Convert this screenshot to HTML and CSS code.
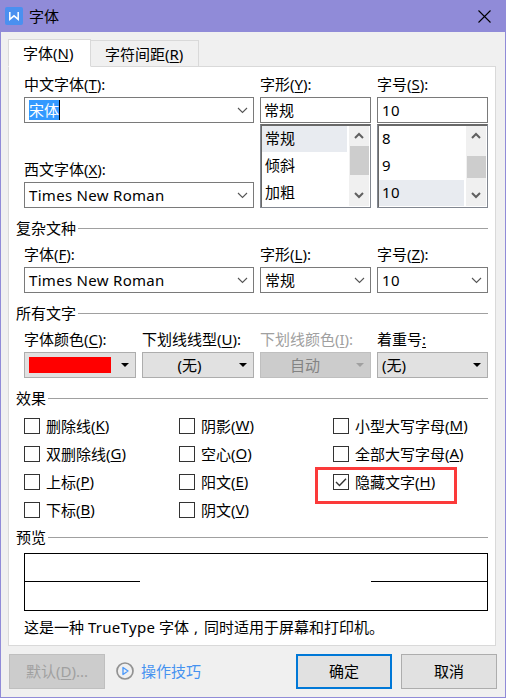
FILE: index.html
```html
<!DOCTYPE html>
<html lang="zh-CN">
<head>
  <meta charset="UTF-8">
  <title>字体</title>
  <link rel="stylesheet" href="styles.css">
</head>
<body>
  <div class="dialog">
    <div class="titlebar">
      <svg class="logo" width="18" height="18" viewBox="0 0 18 18">
        <rect width="18" height="18" rx="2" fill="#4a90f0"/>
        <path d="M4.8 5v7.3L9 8.8l4.2 3.5V5" fill="none" stroke="#fff" stroke-width="1.5"/>
      </svg>
      <span class="title">字体</span>
      <svg class="close" width="13" height="13" viewBox="0 0 13 13">
        <path d="M.5.5l12 12M12.5.5l-12 12" stroke="#000" stroke-width="1.1"/>
      </svg>
    </div>

    <div class="tabs">
      <div class="tab active">字体(<u>N</u>)</div>
      <div class="tab">字符间距(<u>R</u>)</div>
    </div>

    <div class="panel">
      <div class="fonts">
        <div class="font-names">
          <div class="label">中文字体(<u>T</u>):</div>
          <div class="select"><span class="selected">宋体</span><svg class="arrow" width="11" height="7" viewBox="0 0 11 7"><path d="M1 1l4.5 4.5L10 1"/></svg></div>
          <div class="label label-west">西文字体(<u>X</u>):</div>
          <div class="select latin">Times New Roman<svg class="arrow" width="11" height="7" viewBox="0 0 11 7"><path d="M1 1l4.5 4.5L10 1"/></svg></div>
        </div>
        <div class="font-col">
          <div class="label">字形(<u>Y</u>):</div>
          <div class="select edit">常规</div>
          <div class="list">
            <div class="options">
              <div class="option current">常规</div>
              <div class="option">倾斜</div>
              <div class="option">加粗</div>
            </div>
            <div class="scrollbar">
              <svg width="10" height="7" viewBox="0 0 10 7"><path d="M1 6l4-4 4 4"/></svg>
              <div class="track"><div class="thumb thumb-style"></div></div>
              <svg width="10" height="7" viewBox="0 0 10 7"><path d="M1 1l4 4 4-4"/></svg>
            </div>
          </div>
        </div>
        <div class="font-col">
          <div class="label">字号(<u>S</u>):</div>
          <div class="select latin">10</div>
          <div class="list">
            <div class="options latin">
              <div class="option">8</div>
              <div class="option">9</div>
              <div class="option current">10</div>
            </div>
            <div class="scrollbar">
              <svg width="10" height="7" viewBox="0 0 10 7"><path d="M1 6l4-4 4 4"/></svg>
              <div class="track"><div class="thumb thumb-size"></div></div>
              <svg width="10" height="7" viewBox="0 0 10 7"><path d="M1 1l4 4 4-4"/></svg>
            </div>
          </div>
        </div>
      </div>

      <div class="section">复杂文种</div>
      <div class="fonts">
        <div class="font-names">
          <div class="label">字体(<u>F</u>):</div>
          <div class="select latin">Times New Roman<svg class="arrow" width="11" height="7" viewBox="0 0 11 7"><path d="M1 1l4.5 4.5L10 1"/></svg></div>
        </div>
        <div class="font-col">
          <div class="label">字形(<u>L</u>):</div>
          <div class="select">常规<svg class="arrow" width="11" height="7" viewBox="0 0 11 7"><path d="M1 1l4.5 4.5L10 1"/></svg></div>
        </div>
        <div class="font-col">
          <div class="label">字号(<u>Z</u>):</div>
          <div class="select latin">10<svg class="arrow" width="11" height="7" viewBox="0 0 11 7"><path d="M1 1l4.5 4.5L10 1"/></svg></div>
        </div>
      </div>

      <div class="section">所有文字</div>
      <div class="all-text">
        <div>
          <div class="label">字体颜色(<u>C</u>):</div>
          <div class="drop"><span class="color"></span><span class="caret"></span></div>
        </div>
        <div>
          <div class="label">下划线线型(<u>U</u>):</div>
          <div class="drop"><span class="drop-text">(无)</span><span class="caret"></span></div>
        </div>
        <div class="disabled">
          <div class="label">下划线颜色(<u>I</u>):</div>
          <div class="drop"><span class="drop-text">自动</span><span class="caret"></span></div>
        </div>
        <div>
          <div class="label">着重号<u>:</u></div>
          <div class="drop"><span class="drop-text left">(无)</span><span class="caret"></span></div>
        </div>
      </div>

      <div class="section">效果</div>
      <div class="effects">
        <div class="check"><span class="box"></span>删除线(<u>K</u>)</div>
        <div class="check"><span class="box"></span>阴影(<u>W</u>)</div>
        <div class="check"><span class="box"></span>小型大写字母(<u>M</u>)</div>
        <div class="check"><span class="box"></span>双删除线(<u>G</u>)</div>
        <div class="check"><span class="box"></span>空心(<u>O</u>)</div>
        <div class="check"><span class="box"></span>全部大写字母(<u>A</u>)</div>
        <div class="check"><span class="box"></span>上标(<u>P</u>)</div>
        <div class="check"><span class="box"></span>阳文(<u>E</u>)</div>
        <div class="check marked"><span class="box"><svg width="14" height="14" viewBox="0 0 14 14"><path d="M2 7l3.5 3.5L12 3.7"/></svg></span>隐藏文字(<u>H</u>)</div>
        <div class="check"><span class="box"></span>下标(<u>B</u>)</div>
        <div class="check"><span class="box"></span>阴文(<u>V</u>)</div>
      </div>

      <div class="section section-preview">预览</div>
      <div class="preview"><span></span><span></span></div>
      <div class="note">这是一种 <span class="latin">TrueType</span> 字体<span class="comma">,</span>同时适用于屏幕和打印机。</div>
    </div>

    <div class="footer">
      <div class="btn btn-off">默认(<u>D</u>)...</div>
      <div class="tips">
        <svg width="18" height="18" viewBox="0 0 18 18">
          <circle cx="9" cy="9" r="8" fill="none" stroke="#929292" stroke-width="1.7"/>
          <path d="M7 5.5v7l5-3.5z" fill="none" stroke="#4f9bfa" stroke-width="1.4" stroke-linejoin="round"/>
        </svg>
        <span>操作技巧</span>
      </div>
      <div class="btn btn-ok">确定</div>
      <div class="btn">取消</div>
    </div>
  </div>
</body>
</html>
```
FILE: styles.css
```css
*,
*::after {
  box-sizing: border-box;
}

body {
  margin: 0;
  font-family: "Noto Sans", "Noto Sans CJK SC", sans-serif;
  font-size: 15px;
  color: #000;
}

u {
  text-underline-offset: 2px;
  text-decoration-thickness: 1px;
}

.latin {
  letter-spacing: 0.3px;
}

.dialog {
  width: 506px;
  height: 698px;
  background: #f0f0f0;
  border: 1px solid #908bd8;
  border-top: 0;
}

.titlebar {
  display: flex;
  align-items: center;
  height: 32px;
  padding: 0 14px 0 4px;
  background: #908bd8;
}

.title {
  flex: 1;
  margin-left: 6px;
  padding-bottom: 1px;
}

/* tabs */
.tabs {
  display: flex;
  align-items: flex-end;
  height: 35px;
  padding-left: 7px;
}

.tab {
  height: 27px;
  width: 108px;
  padding-left: 14px;
  line-height: 27px;
  border: 1px solid #d9d9d9;
  border-left: 0;
  white-space: nowrap;
}

.tab.active {
  position: relative;
  z-index: 1;
  width: 83px;
  height: 28px;
  padding-left: 14px;
  line-height: 26px;
  background: #fff;
  border-left: 1px solid #d9d9d9;
  border-bottom-color: #fff;
}

.panel {
  width: 488px;
  height: 580px;
  margin: -1px 0 0 7px;
  padding: 6px 7px 0;
  background: #fff;
  border: 1px solid #d9d9d9;
}

.fonts,
.all-text {
  display: flex;
  gap: 6px;
  padding-left: 8px;
}

.font-names {
  width: 230px;
}

.font-col {
  width: 111px;
}

.label {
  height: 24px;
  line-height: 23px;
  white-space: nowrap;
}

.label-west {
  margin-top: 35px;
}

.select {
  display: flex;
  align-items: center;
  justify-content: space-between;
  height: 26px;
  padding: 0 5px 0 4px;
  border: 1px solid #7a7a7a;
  line-height: 24px;
}

.edit {
  padding-left: 3px;
}

.selected {
  height: 20px;
  line-height: 20px;
  color: #fff;
  background: #3399ff;
  border-right: 1px solid #000;
}

.arrow path {
  fill: none;
  stroke: #555;
  stroke-width: 1.1;
}

.list {
  display: flex;
  height: 84px;
  margin-top: 1px;
  padding: 1px;
  border: 1px solid #828790;
  border-top-color: #696969;
  box-shadow: inset 1px 1px 0 #696969;
}

.options {
  flex: 1;
  margin-right: 2px;
}

.option {
  height: 27px;
  padding-left: 3px;
  line-height: 25px;
}

.option.current {
  height: 26px;
  margin-bottom: 1px;
  background: #e8ebf0;
}

.scrollbar {
  display: flex;
  flex-direction: column;
  align-items: center;
  width: 20px;
  padding-top: 6px;
  background: #f0f0f0;
}

.scrollbar path {
  fill: none;
  stroke: #606060;
  stroke-width: 2;
}

.track {
  width: 19px;
  height: 53px;
}

.thumb {
  position: relative;
  background: #cdcdcd;
}

.thumb-style {
  top: 7px;
  height: 29px;
}

.thumb-size {
  top: 17px;
  height: 22px;
}

/* group title with a rule up to the right edge */
.section {
  display: flex;
  align-items: center;
  height: 20px;
  margin: 10px 0 5px;
  line-height: 20px;
}

.section::after {
  content: "";
  flex: 1;
  height: 1px;
  margin-left: 2px;
  background: #a0a0a0;
}

.all-text > div {
  width: 112px;
}

.all-text > div:nth-child(n+3) {
  width: 111px;
}

.drop {
  display: flex;
  align-items: center;
  height: 26px;
  padding: 0 6px 0 4px;
  background: #e1e1e1;
  border: 1px solid #adadad;
}

.color {
  width: 82px;
  height: 16px;
  background: #f00;
}

.drop-text {
  flex: 1;
  padding-right: 7px;
  line-height: 24px;
  text-align: center;
}

.drop-text.left {
  padding: 0;
  text-align: left;
}

.caret {
  margin-left: auto;
  border: 4px solid transparent;
  border-top-color: #000;
  border-bottom: 0;
}

.disabled .label {
  color: #a0a0a0;
}

.disabled .drop {
  color: #838383;
  background: #ccc;
  border-color: #bfbfbf;
}

.disabled .drop-text {
  padding-right: 11px;
}

.disabled .caret {
  border-top-color: #a0a0a0;
}

.effects {
  display: grid;
  grid-template-columns: 155px 154px 1fr;
  grid-auto-rows: 28px;
  margin-top: -1px;
  padding-left: 8px;
}

.check {
  position: relative;
  display: flex;
  align-items: center;
  padding-bottom: 2px;
  white-space: nowrap;
}

.box {
  width: 16px;
  height: 16px;
  margin: 2px 6px 0 0;
  border: 1px solid #333;
}

.box svg {
  display: block;
}

.box path {
  fill: none;
  stroke: #333;
  stroke-width: 1.4;
}

.marked::after {
  content: "";
  position: absolute;
  top: -1px;
  left: -18px;
  width: 142px;
  height: 37px;
  border: 3px solid #fb3a3a;
}

.section-preview {
  margin: 3px 0 6px;
}

.preview {
  display: flex;
  justify-content: space-between;
  height: 58px;
  margin-left: 8px;
  padding-top: 27px;
  border: 1px solid #000;
}

.preview span {
  width: 115px;
  height: 1px;
  background: #000;
}

.preview span:last-child {
  width: 116px;
}

.note {
  height: 34px;
  padding-left: 8px;
  line-height: 33px;
  white-space: nowrap;
}

.comma {
  display: inline-block;
  width: 15px;
  padding-left: 5px;
}

.footer {
  display: flex;
  padding: 8px 8px 0;
}

.btn {
  width: 96px;
  height: 35px;
  line-height: 33px;
  text-align: center;
  background: #e1e1e1;
  border: 1px solid #adadad;
}

.btn-off {
  color: #a0a0a0;
  background: #ccc;
  border-color: #bfbfbf;
}

.btn-ok {
  margin: 0 9px 0 auto;
  line-height: 31px;
  border: 2px solid #0078d7;
}

.tips {
  display: flex;
  align-items: center;
  gap: 7px;
  height: 34px;
  margin-left: 11px;
  color: #4592f0;
}

.tips span {
  padding-bottom: 2px;
}
```
